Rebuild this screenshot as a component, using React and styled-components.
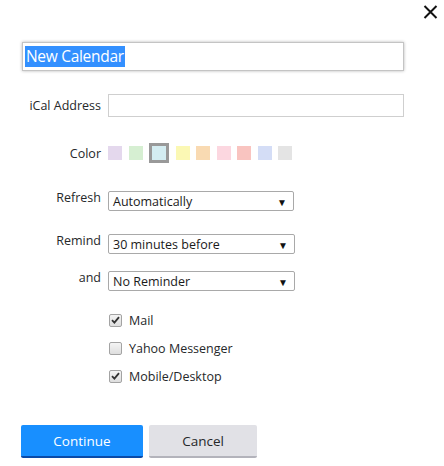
import React from 'react'
import styled, { createGlobalStyle } from 'styled-components'

const GlobalStyle = createGlobalStyle`
    body {
        margin: 0;
        background: #fff;
        font-family: "Segoe UI", "Open Sans", "Noto Sans", sans-serif;
        color: #26282a;
    }
`

const Page = styled.div`
    width: 444px;
    height: 466px;
    overflow: hidden;
`
const TopBar = styled.div`
    height: 42px;
    box-sizing: border-box;
    display: flex;
    justify-content: flex-end;
    align-items: flex-start;
    padding: 5px 6px 0 0;
`
const CloseButton = styled.button`
    border: none;
    background: none;
    padding: 0;
    width: 15px;
    height: 14px;
    cursor: pointer;
    display: flex;
`
const Form = styled.div`
    padding: 0 40px 0 22px;
`
const TitleField = styled.div`
    height: 29px;
    box-sizing: border-box;
    border: 1px solid #c4c4c4;
    box-shadow: 0 0 3px rgba(0, 0, 0, 0.28);
    display: flex;
    align-items: center;
    padding-left: 2px;
`
const Selected = styled.span`
    background: #3390ff;
    color: #fff;
    font-size: 15.5px;
    letter-spacing: -0.3px;
    line-height: 21px;
    padding: 0 1px;
`
const Row = styled.div`
    display: grid;
    grid-template-columns: 79px 1fr;
    column-gap: 7px;
    align-items: ${p => (p.$top ? 'start' : 'center')};
    margin-top: ${p => p.$gap}px;
`
const Label = styled.label`
    font-size: 12.5px;
    color: #26282a;
    text-align: right;
    line-height: 17px;
    margin-top: ${p => (p.$top ? '-2px' : '0')};
`
const TextInput = styled.input`
    height: 23px;
    box-sizing: border-box;
    border: 1px solid #cfcfcf;
    outline: none;
    margin: 0;
    width: 296px;
`
const Swatches = styled.div`
    display: flex;
    align-items: center;
    gap: 6.5px;
    height: 20px;
`
const Swatch = styled.span`
    width: 14px;
    height: 14px;
    background: ${p => p.$color};
    border: ${p => (p.$active ? '3px solid #999' : 'none')};
`
const SelectBox = styled.div`
    width: ${p => p.$width}px;
    height: 20px;
    box-sizing: border-box;
    border: 1px solid #a9a9a9;
    border-radius: 2px;
    display: flex;
    align-items: center;
    justify-content: space-between;
    padding: 1px 6px 0 4px;
    font-size: 12.5px;
    color: #1a1a1a;
    background: #fff;
`
const Arrow = styled.span`
    font-size: 10px;
    color: #111;
`
const CheckList = styled.div`
    margin: 15px 0 0 87px;
`
const CheckRow = styled.label`
    height: 28px;
    display: flex;
    align-items: center;
    gap: 7px;
    font-size: 12.5px;
    color: #26282a;
`
const Box = styled.span`
    width: 13px;
    height: 13px;
    box-sizing: border-box;
    border: 1px solid #a3a3a3;
    border-radius: 2px;
    background: linear-gradient(#f4f4f4, #dedede);
    display: flex;
    align-items: center;
    justify-content: center;
`
const Buttons = styled.div`
    display: flex;
    gap: 6px;
    margin: 35px 0 0 21px;
`
const Button = styled.button`
    height: 33px;
    width: ${p => p.$width}px;
    border: none;
    border-radius: 2px;
    border-bottom: 2px solid ${p => (p.$primary ? '#0a4aa8' : '#b3b3bb')};
    background: ${p => (p.$primary ? '#188fff' : '#e1e1e6')};
    color: ${p => (p.$primary ? '#fff' : '#26282a')};
    font-family: inherit;
    font-size: 13.5px;
    padding: 0;
    cursor: pointer;
`

const colors = ['#e4d8ed', '#d6efd2', '#d4edf2', '#fbf8b4', '#f9dab2', '#fcd7e0', '#f9c4c0', '#d4ddf6', '#e4e4e4']

const Check = ({ checked, children }) => (
  <CheckRow>
    <Box>
      {checked && (
        <svg width="9" height="8" viewBox="0 0 9 8">
          <path d="M1 4.2 L3.4 6.6 L8 1.2" fill="none" stroke="#333" strokeWidth="1.8" />
        </svg>
      )}
    </Box>
    {children}
  </CheckRow>
)

const App = () => {
  return (
    <Page>
      <GlobalStyle />
      <TopBar>
        <CloseButton aria-label="Close">
          <svg width="15" height="14" viewBox="0 0 15 14">
            <path d="M1.5 1 L13.5 13 M13.5 1 L1.5 13" stroke="#111" strokeWidth="2" />
          </svg>
        </CloseButton>
      </TopBar>
      <Form>
        <TitleField>
          <Selected>New Calendar</Selected>
        </TitleField>
        <Row $gap={23}>
          <Label>iCal Address</Label>
          <TextInput />
        </Row>
        <Row $gap={26}>
          <Label>Color</Label>
          <Swatches>
            {colors.map((c, i) => (
              <Swatch key={c} $color={c} $active={i === 2} />
            ))}
          </Swatches>
        </Row>
        <Row $gap={28} $top>
          <Label $top>Refresh</Label>
          <SelectBox $width={186}>Automatically<Arrow>▼</Arrow></SelectBox>
        </Row>
        <Row $gap={23} $top>
          <Label $top>Remind</Label>
          <SelectBox $width={187}>30 minutes before<Arrow>▼</Arrow></SelectBox>
        </Row>
        <Row $gap={17} $top>
          <Label $top>and</Label>
          <SelectBox $width={187}>No Reminder<Arrow>▼</Arrow></SelectBox>
        </Row>
        <CheckList>
          <Check checked>Mail</Check>
          <Check>Yahoo Messenger</Check>
          <Check checked>Mobile/Desktop</Check>
        </CheckList>
      </Form>
      <Buttons>
        <Button $primary $width={122}>Continue</Button>
        <Button $width={108}>Cancel</Button>
      </Buttons>
    </Page>
  )
}

export default App
